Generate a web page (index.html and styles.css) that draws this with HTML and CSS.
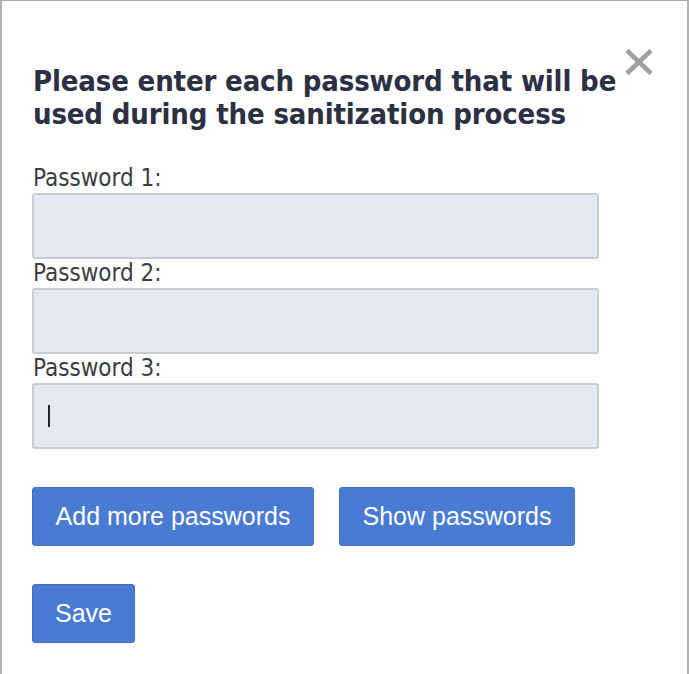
FILE: index.html
```html
<!DOCTYPE html>
<html>
<head>
<meta charset="utf-8">
<link rel="stylesheet" href="styles.css">
</head>
<body>
<div class="dialog">
  <button class="close" aria-label="Close">
    <svg width="28" height="26" viewBox="0 0 28 26"><path d="M2 1.5 L26 24.5 M26 1.5 L2 24.5" stroke="#a0a0a0" stroke-width="4.6" stroke-linecap="butt"/></svg>
  </button>
  <h1 class="title">Please enter each password that will be used during the sanitization process</h1>
  <form class="form">
    <label class="label">Password 1:</label>
    <input class="field" type="password">
    <label class="label">Password 2:</label>
    <input class="field" type="password">
    <label class="label">Password 3:</label>
    <div class="field focused"><span class="caret"></span></div>
    <div class="actions">
      <button type="button" class="btn btn-add">Add more passwords</button>
      <button type="button" class="btn btn-show">Show passwords</button>
    </div>
    <div class="actions save-row">
      <button type="button" class="btn btn-save">Save</button>
    </div>
  </form>
</div>
</body>
</html>
```
FILE: styles.css
```css
html, body {
  margin: 0;
  padding: 0;
  height: 100%;
}
body {
  background: #fdfdfd;
  font-family: "DejaVu Sans Condensed", "DejaVu Sans", sans-serif;
}
.dialog {
  position: relative;
  box-sizing: border-box;
  height: 674px;
  width: 689px;
  border-top: 1px solid #a8a8a8;
  border-left: 2px solid #b0b0b0;
  border-right: 2px solid #b0b0b0;
  padding: 64px 0 0 30px;
}
.close {
  position: absolute;
  top: 48px;
  left: 623px;
  padding: 0;
  border: 0;
  background: transparent;
  width: 28px;
  height: 26px;
}
.close svg { display: block; }
.title {
  margin: 0 0 0 1px;
  width: 600px;
  font-size: 29px;
  font-weight: bold;
  line-height: 33px;
  letter-spacing: -0.15px;
  color: #2b3043;
}
.form {
  display: flex;
  flex-direction: column;
  align-items: flex-start;
  margin-top: 33px;
}
.label {
  font-size: 24px;
  line-height: 29px;
  color: #3a3d44;
  height: 29px;
  margin-left: 1px;
}
.field {
  box-sizing: border-box;
  width: 567px;
  height: 66px;
  background: #e4e8f2;
  border: 2px solid #c9ccd2;
  border-radius: 3px;
  margin: 0;
  display: flex;
  align-items: center;
  padding: 0 14px;
}
.caret {
  display: block;
  width: 2px;
  height: 22px;
  background: #222;
}
.actions {
  display: flex;
  gap: 25px;
  margin-top: 38px;
}
.btn {
  font-family: "Liberation Sans", Arial, sans-serif;
  font-size: 25px;
  color: #ffffff;
  background: #4a7bd2;
  border: 1px solid #4472c8;
  border-radius: 3px;
  height: 59px;
  padding: 0;
  cursor: pointer;
}
.btn-add { width: 282px; }
.btn-show { width: 236px; }
.btn-save { width: 103px; }
.save-row { margin-top: 38px; }
```
